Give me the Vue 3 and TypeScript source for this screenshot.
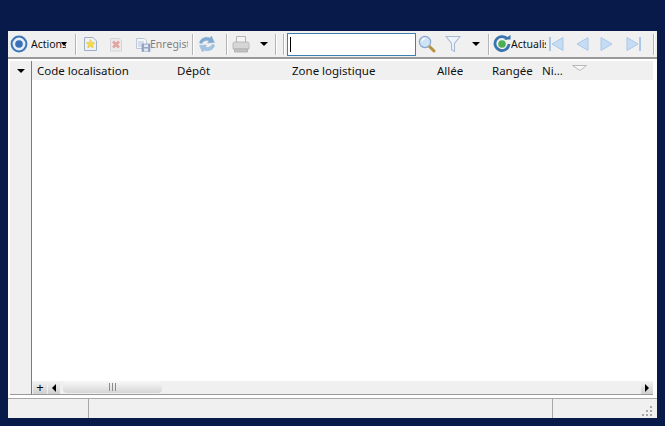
<script setup lang="ts">
const columns = [
  { label: 'Code localisation', width: 140 },
  { label: 'Dépôt', width: 115 },
  { label: 'Zone logistique', width: 145 },
  { label: 'Allée', width: 55 },
  { label: 'Rangée', width: 50 },
]
</script>

<template>
  <div class="page">
    <div class="window">
      <div class="toolbar">
        <svg class="ico action" viewBox="0 0 18 18"><circle cx="9" cy="9" r="7.4" fill="#e6eef8" stroke="#3f76b8" stroke-width="2"/><circle cx="9" cy="9" r="3.8" fill="#3a70b5"/></svg>
        <span class="label actions">Actions</span>
        <span class="caret caret-actions"></span>
        <span class="sep s1"></span>
        <svg class="ico new" viewBox="0 0 15 16"><path d="M1.5 1.5h8.5l3.5 3.5v9.5h-12z" fill="#eef2f6" stroke="#9fb0c4"/><path d="M7.5 3.5l1.4 2.9 3 .4-2.2 2.1.6 3-2.8-1.5-2.8 1.5.6-3-2.2-2.1 3-.4z" fill="#f2da55" stroke="#dcbc3c" stroke-width=".5"/></svg>
        <svg class="ico del" viewBox="0 0 14 15"><path d="M1.5 1.5h8.5l2.5 2.5v10h-11z" fill="#eaeaea" stroke="#d2d4d9"/><path d="M4 4.5l6 6M10 4.5l-6 6" stroke="#e2a3a3" stroke-width="2.6"/></svg>
        <svg class="ico save" viewBox="0 0 16 16"><path d="M1.5 2.5h8l2 2v8h-10z" fill="#f3f5f9" stroke="#bcc8d8"/><path d="M3 6h6M3 8h6M3 10h5" stroke="#b5c4d8"/><rect x="7" y="8" width="8" height="7.5" fill="#97a7c8" stroke="#8294b8" stroke-width=".6"/><rect x="9" y="8.5" width="4" height="2.5" fill="#e3e8f2"/><rect x="9" y="12.5" width="4" height="3" fill="#dfe5f0"/></svg>
        <span class="label enreg">Enregistrer</span>
        <span class="sep s2"></span>
        <svg class="ico refresh" viewBox="0 0 18 18"><path d="M1.5 8C2 3.500 7.500 1 12 3l1.500-2 3 6.500-7 .5 1.500-2C8 4.800 5 6 4 8.500z" fill="#7fa8d2" stroke="#8fb2d4" stroke-width=".5"/><path d="M16.500 10c-.5 4.500-6 7-10.500 5l-1.500 2-3-6.500 7-.5-1.500 2c3 1.200 6 0 7-2.500z" fill="#a3c3e3" stroke="#8fb2d4" stroke-width=".5"/></svg>
        <span class="sep s3"></span>
        <svg class="ico printer" viewBox="0 0 18 18"><path d="M4.500 1.500h9v6h-9z" fill="#f4f4f4" stroke="#b5b5b5"/><path d="M1 8.500q0-1.500 2-1.500h12q2 0 2 1.500v5.500H1z" fill="#d6d6d6" stroke="#b0b0b0" stroke-width=".8"/><path d="M2.500 14h13v3h-13z" fill="#c4c4c4" stroke="#a9a9a9" stroke-width=".8"/></svg>
        <span class="caret caret-print"></span>
        <span class="sep s4"></span>
        <span class="sep s5"></span>
        <div class="search-box"><span class="cursor"></span></div>
        <svg class="ico lens" viewBox="0 0 18 18"><path d="M10.500 10.500l5.500 5.500" stroke="#b8913c" stroke-width="3" stroke-linecap="round"/><circle cx="7" cy="7" r="5.600" fill="#cfe3f7" stroke="#8aa8cb" stroke-width="1.200"/><path d="M4 6a3.400 3.400 0 0 1 3-2.600" stroke="#fff" fill="none" stroke-width="1.200"/></svg>
        <svg class="ico funnel" viewBox="0 0 16 18"><path d="M1 1.500h14L9.500 8.500v8l-3-2v-6z" fill="#eef3fa" stroke="#a8bbd4" stroke-width="1.100"/></svg>
        <span class="caret caret-filter"></span>
        <span class="sep s6"></span>
        <svg class="ico reload" viewBox="0 0 18 18"><path d="M14.500 4.200A7 7 0 1 0 16 9" fill="none" stroke="#3a74ae" stroke-width="2.800"/><path d="M11 4.500h6.500V0z" fill="#3a74ae"/><circle cx="9" cy="9" r="3.800" fill="#4cb050"/></svg>
        <span class="label actualis">Actualiser</span>
        <svg class="ico nav first" viewBox="0 0 15 16"><path d="M1 1v14" stroke="#a9c8ea" stroke-width="2"/><path d="M14 1.500v13L3 8z" fill="#c6dcf3" stroke="#a9c8ea"/></svg>
        <svg class="ico nav prev" viewBox="0 0 14 16"><path d="M13 1.500v13L2 8z" fill="#c6dcf3" stroke="#a9c8ea"/></svg>
        <svg class="ico nav next" viewBox="0 0 14 16"><path d="M1 1.500v13L12 8z" fill="#c6dcf3" stroke="#a9c8ea"/></svg>
        <svg class="ico nav last" viewBox="0 0 15 16"><path d="M14 1v14" stroke="#a9c8ea" stroke-width="2"/><path d="M1 1.500v13L12 8z" fill="#c6dcf3" stroke="#a9c8ea"/></svg>
        <span class="sep s7"></span>
      </div>

      <div class="grid">
        <div class="rail">
          <div class="rail-head"><span class="caret"></span></div>
        </div>
        <div class="main">
          <div class="header">
            <span v-for="c in columns" :key="c.label" class="col" :style="{ width: c.width + 'px' }">{{ c.label }}</span>
            <span class="col">Ni...</span>
            <svg class="sort" viewBox="0 0 15 6"><path d="M0.500 0.500h14L8 5.500z" fill="#f8f8f8" stroke="#b8b8b8"/></svg>
          </div>
          <div class="body"></div>
          <div class="scrollbar">
            <span class="plus">+</span>
            <span class="sbtn left"><span class="tri-l"></span></span>
            <div class="track">
              <div class="thumb"><span class="grip"></span></div>
            </div>
            <span class="sbtn right"><span class="tri-r"></span></span>
          </div>
        </div>
      </div>

      <div class="status">
        <span class="cell c1"></span>
        <span class="cell c2"></span>
        <span class="cell c3">
          <svg class="resize" viewBox="0 0 12 12"><g fill="#a8a8a8"><rect x="9" y="1" width="2" height="2"/><rect x="5" y="5" width="2" height="2"/><rect x="9" y="5" width="2" height="2"/><rect x="1" y="9" width="2" height="2"/><rect x="5" y="9" width="2" height="2"/><rect x="9" y="9" width="2" height="2"/></g></svg>
        </span>
      </div>
    </div>
  </div>
</template>

<style>
html, body { margin: 0; background: #071a4a; }
</style>

<style scoped>
.page {
  width: 665px;
  height: 426px;
  background: #071a4a;
  padding: 31px 8px 8px;
  box-sizing: border-box;
  font-family: "Noto Sans", "Open Sans", sans-serif;
  font-size: 11.5px;
  color: #111;
  overflow: hidden;
}
.window {
  width: 649px;
  height: 387px;
  background: #fff;
  display: flex;
  flex-direction: column;
}
.toolbar {
  height: 26px;
  flex: none;
  background: #f0f0f0;
  display: flex;
  align-items: center;
  padding-left: 2px;
  border-bottom: 2px solid #9a9a9a;
  position: relative;
}
.ico { flex: none; display: block; }
.action { width: 18px; height: 18px; }
.label {
  flex: none;
  overflow: hidden;
  white-space: nowrap;
  font-size: 10.5px;
  line-height: 16px;
}
.actions { width: 35px; margin-left: 3px; }
.caret {
  display: block;
  flex: none;
  width: 0;
  height: 0;
  border-left: 4px solid transparent;
  border-right: 4px solid transparent;
  border-top: 4px solid #000;
}
.caret-actions { margin-left: -5px; border-left-width: 3px; border-right-width: 3px; }
.sep { flex: none; width: 1px; height: 21px; background: #b4b4b4; box-shadow: 1px 0 0 #fff; }
.s1 { margin-left: 8px; }
.new { width: 15px; height: 16px; margin-left: 7px; }
.del { width: 14px; height: 15px; margin-left: 11px; }
.save { width: 16px; height: 16px; margin-left: 12px; }
.enreg { width: 38px; margin-left: -1px; color: #7f7f7f; }
.s2 { margin-left: 4px; }
.refresh { width: 18px; height: 18px; margin-left: 5px; }
.s3 { margin-left: 10px; }
.printer { width: 18px; height: 18px; margin-left: 5px; }
.caret-print { margin-left: 10px; }
.s4 { margin-left: 7px; }
.s5 { margin-left: 7px; }
.search-box {
  flex: none;
  width: 129px;
  height: 23px;
  margin-left: 3px;
  box-sizing: border-box;
  border: 1px solid #3c7fb1;
  background: #fff;
  display: flex;
  align-items: center;
  padding-left: 2px;
}
.cursor { width: 1px; height: 15px; background: #000; }
.lens { width: 18px; height: 18px; margin-left: 2px; }
.funnel { width: 16px; height: 18px; margin-left: 9px; }
.caret-filter { margin-left: 11px; }
.s6 { margin-left: 8px; }
.reload { width: 18px; height: 18px; margin-left: 4px; }
.actualis { width: 35px; margin-left: 0; }
.first { width: 15px; height: 16px; margin-left: 3px; }
.prev { width: 14px; height: 16px; margin-left: 11px; }
.next { width: 14px; height: 16px; margin-left: 11px; }
.last { width: 15px; height: 16px; margin-left: 12px; }
.s7 { margin-left: 12px; }

.grid {
  flex: 1;
  min-height: 0;
  display: flex;
  padding: 2px 4px 0 2px;
  border-bottom: 1px solid #fff;
}
.rail {
  width: 21px;
  flex: none;
  background: #f0f0f0;
  border-right: 1px solid #7d7d7d;
  box-sizing: content-box;
  border-bottom: 1px solid #9a9a9a;
}
.rail-head {
  height: 19px;
  display: flex;
  align-items: center;
  justify-content: center;
}
.main {
  flex: 1;
  min-width: 0;
  display: flex;
  flex-direction: column;
}
.header {
  height: 19px;
  flex: none;
  background: #f0f0f0;
  display: flex;
  align-items: center;
  padding-left: 5px;
}
.col { flex: none; white-space: nowrap; line-height: 16px; }
.sort { width: 15px; height: 6px; margin-left: 9px; margin-top: -5px; }
.body { flex: 1; background: #fff; }
.scrollbar {
  height: 13px;
  flex: none;
  background: #f0f0f0;
  border-bottom: 1px solid #9a9a9a;
  display: flex;
  align-items: center;
}
.plus {
  width: 14px;
  height: 13px;
  margin-left: 1px;
  text-align: center;
  line-height: 13px;
  font-size: 13px;
  color: #000;
  background: linear-gradient(#f4f4f4, #cfcfcf);
  flex: none;
}
.sbtn {
  flex: none;
  width: 12px;
  height: 13px;
  background: linear-gradient(#f4f4f4, #cfcfcf);
  display: flex;
  align-items: center;
  justify-content: center;
}
.left { margin-left: 1px; }
.tri-l { width: 0; height: 0; border-top: 4px solid transparent; border-bottom: 4px solid transparent; border-right: 4px solid #000; }
.tri-r { width: 0; height: 0; border-top: 4px solid transparent; border-bottom: 4px solid transparent; border-left: 4px solid #000; }
.track { flex: 1; height: 13px; padding-left: 3px; }
.thumb {
  width: 99px;
  height: 12px;
  border-radius: 4px;
  background: linear-gradient(#f8f8f8, #e6e6e6 55%, #d6d6d6);
  display: flex;
  align-items: center;
  justify-content: center;
}
.grip {
  width: 7px;
  height: 8px;
  background: repeating-linear-gradient(90deg, #8c8c8c 0 1px, transparent 1px 3px);
}
.status {
  height: 19px;
  flex: none;
  display: flex;
  background: #f0f0f0;
  border-top: 1px solid #a8a8a8;
  margin-top: 2px;
}
.cell { display: block; flex: none; border-right: 1px solid #a8a8a8; box-sizing: border-box; }
.c1 { width: 81px; }
.c2 { width: 464px; }
.c3 { flex: 1; border-right: 0; display: flex; justify-content: flex-end; align-items: flex-end; padding: 0 4px 1px 0; }
.resize { width: 12px; height: 12px; display: block; }
</style>
